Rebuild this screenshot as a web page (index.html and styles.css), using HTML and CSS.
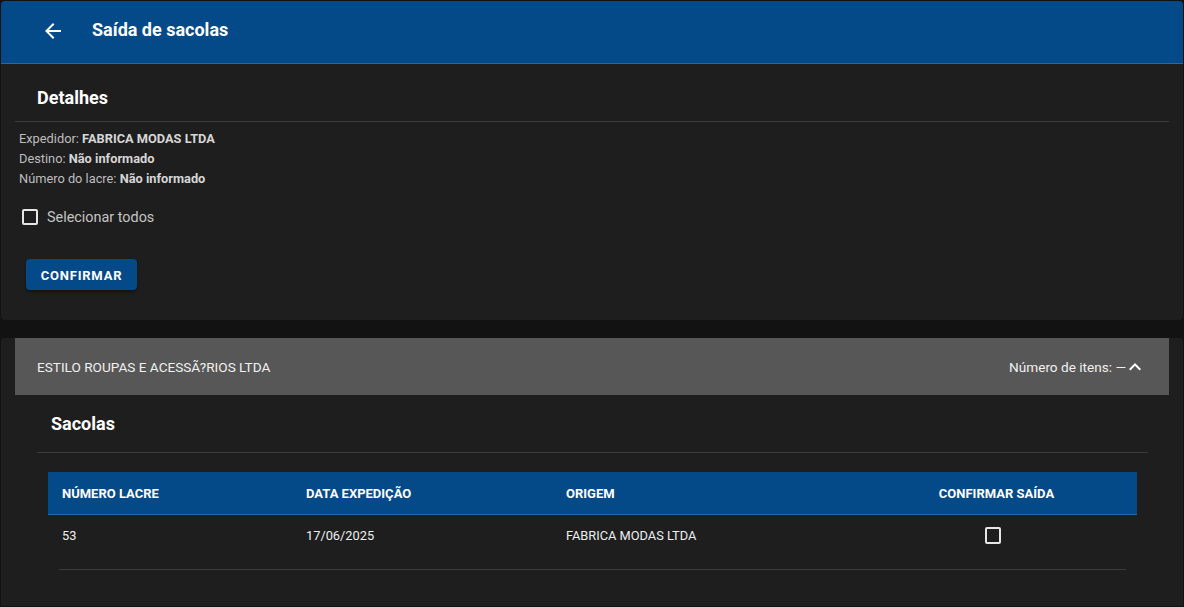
FILE: index.html
```html
<!DOCTYPE html>
<html lang="pt-BR">
<head>
  <meta charset="UTF-8" />
  <meta name="viewport" content="width=device-width, initial-scale=1.0"/>
  <title>Saída de sacolas</title>
  <link rel="stylesheet" href="styles.css">
</head>
<body>
  <!-- barra superior -->
  <header class="app-bar">
    <button class="back" aria-label="Voltar">
      <svg width="24" height="24" viewBox="0 0 24 24"><path fill="#fff" d="M20 11H7.83l5.59-5.59L12 4l-8 8 8 8 1.41-1.41L7.83 13H20v-2z"/></svg>
    </button>
    <h1 class="title">Saída de sacolas</h1>
  </header>

  <!-- detalhes da expedição -->
  <section class="card details">
    <h2 class="card-title">Detalhes</h2>
    <div class="divider"></div>
    <div class="info">
      <div>Expedidor: <b>FABRICA MODAS LTDA</b></div>
      <div>Destino: <b>Não informado</b></div>
      <div>Número do lacre: <b>Não informado</b></div>
    </div>
    <label class="check-row">
      <span class="checkbox"></span>
      <span>Selecionar todos</span>
    </label>
    <button class="btn-primary">CONFIRMAR</button>
  </section>

  <!-- lista por destinatário -->
  <section class="card group">
    <div class="accordion-head">
      <span class="company">ESTILO ROUPAS E ACESSÃ?RIOS LTDA</span>
      <span class="count">Número de itens: —</span>
      <svg class="chevron" width="24" height="24" viewBox="0 0 24 24"><path fill="#fff" d="M12 8l-6 6 1.41 1.41L12 10.83l4.59 4.58L18 14z"/></svg>
    </div>
    <div class="accordion-body">
      <h2 class="sub-title">Sacolas</h2>
      <div class="divider"></div>
      <div class="table">
        <div class="table-head">
          <div>NÚMERO LACRE</div>
          <div>DATA EXPEDIÇÃO</div>
          <div>ORIGEM</div>
          <div class="center">CONFIRMAR SAÍDA</div>
        </div>
        <div class="table-row">
          <div>53</div>
          <div>17/06/2025</div>
          <div>FABRICA MODAS LTDA</div>
          <div class="center"><span class="checkbox"></span></div>
        </div>
        <div class="row-line"></div>
      </div>
    </div>
  </section>
</body>
</html>
```

FILE: styles.css
```css
/* base */
body {
  margin: 0;
  padding: 1px;
  background-color: #121212;
  font-family: Roboto, "Liberation Sans", sans-serif;
  color: #fff;
}

h1, h2 {
  margin: 0;
}

/* barra superior */
.app-bar {
  height: 62px;
  background-color: #044a88;
  border-bottom: 1px solid #2b67a5;
  border-radius: 4px 4px 0 0;
  display: flex;
  align-items: center;
  padding-left: 40px;
}

.back {
  background: none;
  border: none;
  padding: 0;
  width: 24px;
  height: 24px;
  display: flex;
  cursor: pointer;
  margin-top: -3px;
}

.title {
  margin-left: 27px;
  margin-top: -5px;
  font-size: 18px;
  font-weight: 700;
  line-height: 24px;
}

/* cartões */
.card {
  background-color: #1e1e1e;
  padding: 0 14px;
}

.details {
  height: 256px;
  border-radius: 0 0 4px 4px;
}

.card-title {
  font-size: 18px;
  font-weight: 700;
  line-height: 24px;
  padding: 22px 22px 11px;
}

.divider {
  height: 1px;
  background-color: #3b3b3b;
}

.info {
  margin-top: 7px;
  padding-left: 4px;
  font-size: 12.8px;
  line-height: 20px;
  color: #bdbdbd;
}

.info b {
  color: #d6d6d6;
}

.check-row {
  display: flex;
  align-items: center;
  height: 28px;
  margin-top: 14px;
  padding-left: 7px;
  font-size: 14.4px;
  color: #c4c4c4;
}

.checkbox {
  display: inline-block;
  box-sizing: border-box;
  width: 16px;
  height: 16px;
  border: 2px solid #e6e6e6;
  border-radius: 2px;
  margin-right: 9px;
}

.btn-primary {
  margin: 28px 0 0 11px;
  width: 111px;
  height: 31px;
  padding-top: 2px;
  border: none;
  border-radius: 4px;
  background-color: #044a88;
  color: #fff;
  font-family: inherit;
  font-size: 13px;
  font-weight: 700;
  letter-spacing: 0.8px;
  box-shadow: 0 2px 3px rgba(0, 0, 0, 0.4);
  cursor: pointer;
}

/* grupo por destinatário */
.group {
  margin-top: 18px;
  height: 268px;
  border-radius: 4px 4px 0 0;
}

.accordion-head {
  height: 57px;
  background-color: #575757;
  display: flex;
  align-items: center;
  padding: 0 22px 0 22px;
  font-size: 13.6px;
  color: #f0f0f0;
}

.company {
  flex: 1;
}

.chevron {
  margin-left: -3px;
}

.accordion-body {
  padding: 0 21px 0 22px;
}

.sub-title {
  font-size: 18px;
  font-weight: 700;
  line-height: 24px;
  padding: 17px 14px 16px;
}

/* tabela */
.table {
  margin: 19px 11px 0;
}

.table-head,
.table-row {
  display: grid;
  grid-template-columns: 244px 260px 304px 1fr;
  align-items: center;
}

.table-head > div,
.table-row > div {
  padding-left: 14px;
}

.table-head {
  height: 42px;
  background-color: #044a88;
  border-bottom: 1px solid #2b67a5;
  font-size: 13px;
  font-weight: 700;
}

.table-row {
  height: 40px;
  font-size: 12.8px;
  color: #eeeeee;
}

.table-head > .center,
.table-row > .center {
  padding-left: 0;
  text-align: center;
}

.table-row .checkbox {
  vertical-align: middle;
  width: 16px;
  height: 17px;
  margin: 0 0 0 -8px;
}

.row-line {
  margin: 14px 11px 0;
  height: 1px;
  background-color: #3b3b3b;
}
```
